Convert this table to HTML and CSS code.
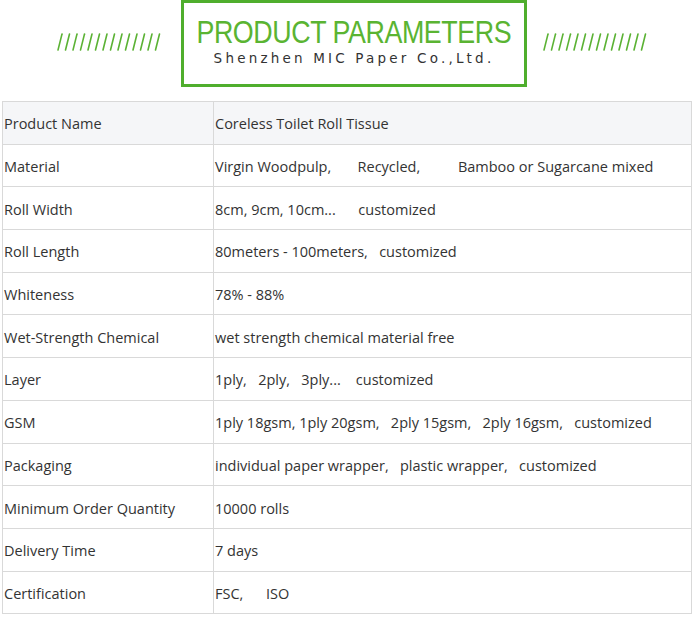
FILE: index.html
```html
<!DOCTYPE html>
<html>
<head>
<meta charset="utf-8">
<link rel="stylesheet" href="styles.css">
</head>
<body>
<header class="banner">
  <svg class="slashes" width="106" height="18" viewBox="0 0 106 18">
    <g stroke="#5bb234" stroke-width="1.6" stroke-linecap="round">
      <line x1="1" y1="17" x2="5" y2="1"/><line x1="8.5" y1="17" x2="12.5" y2="1"/><line x1="16" y1="17" x2="20" y2="1"/><line x1="23.5" y1="17" x2="27.5" y2="1"/><line x1="31" y1="17" x2="35" y2="1"/><line x1="38.5" y1="17" x2="42.5" y2="1"/><line x1="46" y1="17" x2="50" y2="1"/><line x1="53.5" y1="17" x2="57.5" y2="1"/><line x1="61" y1="17" x2="65" y2="1"/><line x1="68.5" y1="17" x2="72.5" y2="1"/><line x1="76" y1="17" x2="80" y2="1"/><line x1="83.5" y1="17" x2="87.5" y2="1"/><line x1="91" y1="17" x2="95" y2="1"/><line x1="98.5" y1="17" x2="102.5" y2="1"/>
    </g>
  </svg>
  <div class="title-box">
    <div class="title">PRODUCT PARAMETERS</div>
    <div class="subtitle">Shenzhen MIC Paper Co.,Ltd.</div>
  </div>
  <svg class="slashes" width="106" height="18" viewBox="0 0 106 18">
    <g stroke="#5bb234" stroke-width="1.6" stroke-linecap="round">
      <line x1="1" y1="17" x2="5" y2="1"/><line x1="8.5" y1="17" x2="12.5" y2="1"/><line x1="16" y1="17" x2="20" y2="1"/><line x1="23.5" y1="17" x2="27.5" y2="1"/><line x1="31" y1="17" x2="35" y2="1"/><line x1="38.5" y1="17" x2="42.5" y2="1"/><line x1="46" y1="17" x2="50" y2="1"/><line x1="53.5" y1="17" x2="57.5" y2="1"/><line x1="61" y1="17" x2="65" y2="1"/><line x1="68.5" y1="17" x2="72.5" y2="1"/><line x1="76" y1="17" x2="80" y2="1"/><line x1="83.5" y1="17" x2="87.5" y2="1"/><line x1="91" y1="17" x2="95" y2="1"/><line x1="98.5" y1="17" x2="102.5" y2="1"/>
    </g>
  </svg>
</header>
<table class="params">
  <tr class="first"><td class="k">Product Name</td><td class="v">Coreless Toilet Roll Tissue</td></tr>
  <tr><td class="k">Material</td><td class="v">Virgin Woodpulp,&nbsp;&nbsp;&nbsp;&nbsp;&nbsp;&nbsp; Recycled,&nbsp;&nbsp;&nbsp;&nbsp;&nbsp;&nbsp;&nbsp;&nbsp;&nbsp; Bamboo or Sugarcane mixed</td></tr>
  <tr><td class="k">Roll Width</td><td class="v">8cm, 9cm, 10cm...&nbsp;&nbsp;&nbsp;&nbsp;&nbsp; customized</td></tr>
  <tr><td class="k">Roll Length</td><td class="v">80meters - 100meters,&nbsp;&nbsp; customized</td></tr>
  <tr><td class="k">Whiteness</td><td class="v">78% - 88%</td></tr>
  <tr><td class="k">Wet-Strength Chemical</td><td class="v">wet strength chemical material free</td></tr>
  <tr><td class="k">Layer</td><td class="v">1ply,&nbsp;&nbsp; 2ply,&nbsp;&nbsp; 3ply...&nbsp;&nbsp;&nbsp; customized</td></tr>
  <tr><td class="k">GSM</td><td class="v">1ply 18gsm, 1ply 20gsm,&nbsp;&nbsp; 2ply 15gsm,&nbsp;&nbsp; 2ply 16gsm,&nbsp;&nbsp; customized</td></tr>
  <tr><td class="k">Packaging</td><td class="v">individual paper wrapper,&nbsp;&nbsp; plastic wrapper,&nbsp;&nbsp; customized</td></tr>
  <tr><td class="k">Minimum Order Quantity</td><td class="v">10000 rolls</td></tr>
  <tr><td class="k">Delivery Time</td><td class="v">7 days</td></tr>
  <tr><td class="k">Certification</td><td class="v">FSC,&nbsp;&nbsp;&nbsp;&nbsp;&nbsp; ISO</td></tr>
</table>
</body>
</html>
```

FILE: styles.css
```css
html, body {
  margin: 0;
  padding: 0;
  background: #fff;
}
body {
  font-family: "Open Sans", "Noto Sans", sans-serif;
  color: #333;
}
.banner {
  display: flex;
  align-items: flex-start;
  padding-left: 57px;
  height: 101px;
  box-sizing: border-box;
}
.slashes {
  margin-top: 33px;
  flex: none;
}
.title-box {
  margin: 0 16px 0 18px;
  width: 346px;
  height: 87px;
  box-sizing: border-box;
  border: 3px solid #4fae2d;
  display: flex;
  flex-direction: column;
  align-items: center;
  padding-top: 12px;
  flex: none;
}
.title {
  font-family: "Liberation Sans", Arial, sans-serif;
  font-size: 30.5px;
  line-height: 34px;
  color: #5ab432;
  white-space: nowrap;
  letter-spacing: -0.5px;
  transform: scaleX(0.88);
}
.subtitle {
  font-family: "DejaVu Sans", sans-serif;
  font-size: 13.5px;
  line-height: 18px;
  letter-spacing: 3.2px;
  color: #333;
  margin-top: 0;
  white-space: nowrap;
}
.params {
  margin-left: 2px;
  width: 690px;
  border-collapse: collapse;
  font-size: 14.5px;
  color: #333;
}
.params td {
  border: 1px solid #d9d9d9;
  height: 39.7px;
  padding: 2px 0 0 1px;
  white-space: nowrap;
}
.params td.k {
  width: 209px;
}
.params tr.first td {
  background: #f5f6f8;
}
```
